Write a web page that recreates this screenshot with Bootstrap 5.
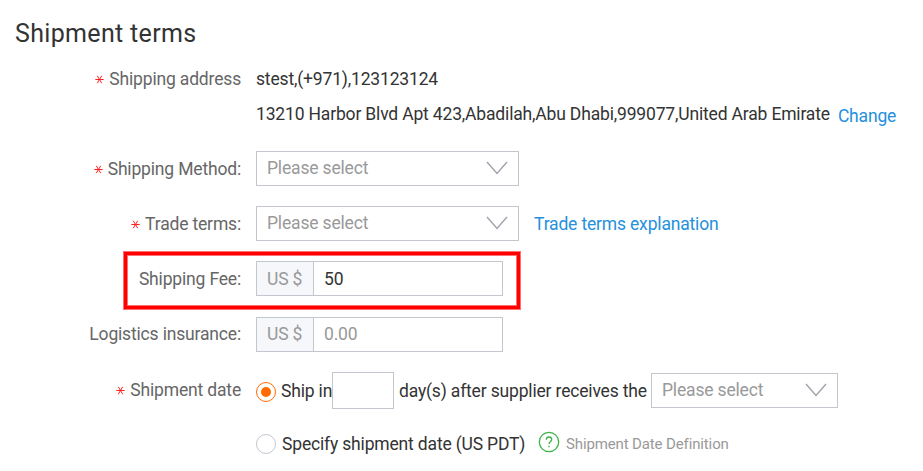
<!DOCTYPE html>
<html lang="en">
<head>
<meta charset="utf-8">
<title>Shipment terms</title>
<meta name="viewport" content="width=device-width, initial-scale=1">
<link href="https://cdn.jsdelivr.net/npm/bootstrap@5.3.0/dist/css/bootstrap.min.css" rel="stylesheet">
<style>
body{font-family:Roboto,"Liberation Sans",sans-serif;font-size:17.5px;line-height:22px;letter-spacing:-.17px;color:#333;background:#fff;overflow:hidden}
.title{font-size:25px;line-height:30px;padding:19px 0 0 15px;height:61px;letter-spacing:.33px}
.line{height:35px;white-space:nowrap}
.stack{padding-top:20px;row-gap:20.2px}
.lbl{width:241px;margin-right:15px;color:#666;flex:none}
.req{width:9px;height:9px;margin-right:5px;stroke:#ff2020;stroke-width:1;fill:none;vertical-align:1px}
.ctl,.ctl:focus{height:35px;border:1px solid #c4c6cf;border-radius:0;padding:0 10px;font-size:17.5px;line-height:22px;letter-spacing:-.17px;color:#333;background:#fff}
.pick{width:263px;color:#999;padding:0 10px 2px}
.pick svg{width:22px;height:14px;stroke:#a0a2ad;stroke-width:1.4;fill:none}
.pick-sm{width:187px;padding-bottom:0}
.money{width:247px}
.money .input-group-text{width:58px;background:#f5f7fa;color:#999}
.ctl::placeholder{color:#999;opacity:1}
.days,.days:focus{width:62px;height:37px;flex:none}
.lnk{color:#2590dc;text-decoration:none}
.explain{margin-left:15px}
.date-line{padding-top:1px;height:36px}
.date-line .lbl{padding-bottom:1px}
.date-line>span{padding-top:1px}
.ship-in{width:51px;margin-left:5px}
.after{width:252px;margin-left:5px}
.dot{width:20px;height:20px;flex:none;border:1px solid #c4c6cf}
.date-line>.dot-on{border-color:#ff6a00;margin-top:3px;padding:0}
.dot-on::after{content:"";width:10px;height:10px;border-radius:50%;background:#ff6a00}
.last-line{height:33px;white-space:nowrap}
.specify{width:243px;margin-left:6px}
.hint{font-size:15px;color:#999;margin-left:6px;letter-spacing:-.13px}
.help{width:22px;height:22px;flex:none;margin:0 0 5px 13px;fill:none;stroke:#3db34a;stroke-width:1.3}
.callout{left:123px;top:251px;width:398px;height:59px;border:5px solid #f00;pointer-events:none}
.callout::before,.callout::after{content:"";position:absolute;border:1px solid #ff7070}
.callout::before{inset:-5px}
.callout::after{inset:-1px}
</style>
</head>
<body>
<svg class="d-none"><symbol id="star" viewBox="0 0 9 9"><path d="M.3 4.500H8.700M2.300 .8L6.700 8.200M6.700 .8L2.300 8.200"/></symbol><symbol id="arrow" viewBox="0 0 22 14"><path d="M1 1L11 12.500L21 1"/></symbol></svg>
<main class="position-relative">
<h1 class="title fw-normal m-0">Shipment terms</h1>
<div class="line d-flex align-items-center"><div class="lbl text-end"><svg class="req"><use href="#star"/></svg>Shipping address</div><span>stest,(+971),123123124</span></div>
<div class="line d-flex align-items-center"><div class="lbl"></div><span>13210 Harbor Blvd Apt 423,Abadilah,Abu Dhabi,999077,United Arab Emirate</span><a href="#" class="lnk ms-2 pt-1">Change</a></div>
<div class="stack d-grid">
<div class="line d-flex align-items-center"><div class="lbl text-end"><svg class="req"><use href="#star"/></svg>Shipping Method:</div><div class="ctl pick d-flex align-items-center justify-content-between">Please select<svg><use href="#arrow"/></svg></div></div>
<div class="line d-flex align-items-center"><div class="lbl text-end"><svg class="req"><use href="#star"/></svg>Trade terms:</div><div class="ctl pick d-flex align-items-center justify-content-between">Please select<svg><use href="#arrow"/></svg></div><a href="#" class="lnk explain">Trade terms explanation</a></div>
<div class="line d-flex align-items-center"><label class="lbl text-end" for="fee">Shipping Fee:</label><div class="input-group money flex-nowrap"><span class="input-group-text ctl">US $</span><input id="fee" class="form-control ctl" value="50"></div></div>
<div class="line d-flex align-items-center"><label class="lbl text-end" for="insurance">Logistics insurance:</label><div class="input-group money flex-nowrap"><span class="input-group-text ctl">US $</span><input id="insurance" class="form-control ctl" placeholder="0.00"></div></div>
<div class="line date-line d-flex align-items-center"><div class="lbl text-end"><svg class="req"><use href="#star"/></svg>Shipment date</div><span class="dot dot-on rounded-circle d-flex align-items-center justify-content-center"></span><span class="ship-in">Ship in</span><input class="form-control ctl days" aria-label="Days"><span class="after">day(s) after supplier receives the</span><div class="ctl pick pick-sm d-flex align-items-center justify-content-between">Please select<svg><use href="#arrow"/></svg></div></div>
<div class="last-line d-flex align-items-center"><div class="lbl"></div><span class="dot rounded-circle"></span><span class="specify">Specify shipment date (US PDT)</span><svg class="help" viewBox="0 0 22 22"><circle cx="11" cy="11" r="9.700"/><path d="M8.300 8.700Q8.300 6 11 6T13.700 8.500Q13.700 9.700 12.300 10.700Q11 11.700 11 13M11 14.700V16.300"/></svg><span class="hint">Shipment Date Definition</span></div>
</div>
<div class="position-absolute callout"></div>
</main>
<script src="https://cdn.jsdelivr.net/npm/bootstrap@5.3.0/dist/js/bootstrap.bundle.min.js"></script>
</body>
</html>
